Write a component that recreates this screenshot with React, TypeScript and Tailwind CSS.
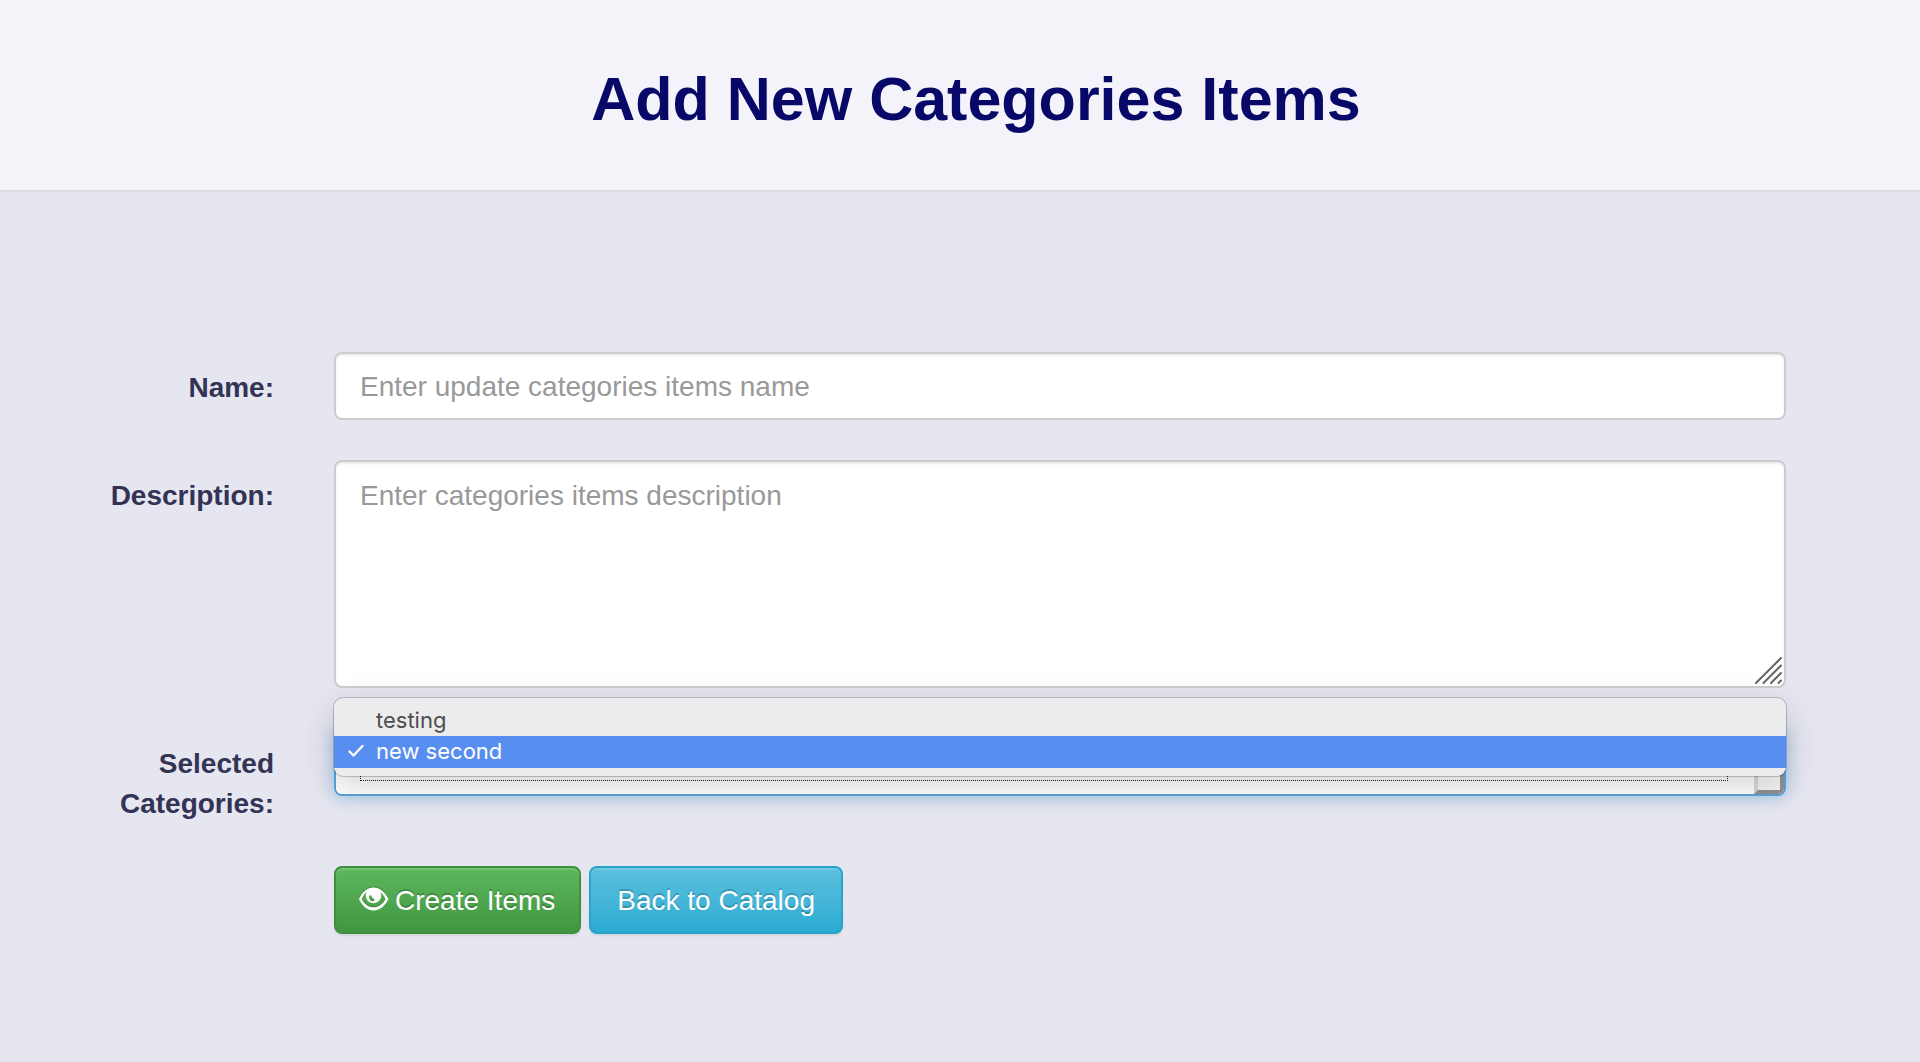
import React from "react";

const labelClass =
  "pt-4 pr-[60px] text-right text-[28px] leading-10 font-bold text-[#333355]";

const fieldClass =
  "block w-full rounded-lg border-2 border-[#cccccc] bg-white px-6 text-[28px] text-[#555555] shadow-[inset_0_2px_2px_rgba(0,0,0,0.075)] outline-none placeholder:text-[#999999] placeholder:opacity-100";

const buttonClass =
  "flex h-[68px] items-center rounded-lg border-2 pt-0.5 text-[28px] leading-10 text-white [text-shadow:0_-2px_0_rgba(0,0,0,0.2)] shadow-[inset_0_2px_0_rgba(255,255,255,0.15),0_2px_2px_rgba(0,0,0,0.075)]";

function EyeIcon() {
  return (
    <svg
      viewBox="0 0 30 24"
      className="mr-1.5 mb-1 h-6 w-[30px] shrink-0 drop-shadow-[0_-1px_0_rgba(0,0,0,0.2)]"
      aria-hidden="true"
    >
      <path
        fillRule="evenodd"
        fill="currentColor"
        d="M14.500 0.500C8.500 0.500 3 5 0 12C3 19 8.500 23.500 14.500 23.500S26 19 29.500 12C26 5 20.500 0.500 14.500 0.500ZM7.800 5C7.100 6.100 6.800 7.300 6.800 8.600C6.800 12.800 10.200 16.200 14.500 16.200S22.200 12.800 22.200 8.600C22.200 7.300 21.900 6.100 21.200 5C23.600 6.900 25.400 9.400 26.500 12C24 17 19.600 20.300 14.500 20.300S5.200 17 2.800 12C3.700 9.400 5.400 6.900 7.800 5ZM10.200 8.800C9.500 11.600 11 14 13.600 14.300C15.400 14.300 16 12.600 15 11.500C13.500 11.400 12.600 10.300 12.600 8.800C12 8 10.700 8 10.200 8.800Z"
      />
    </svg>
  );
}

function ResizeGrip() {
  return (
    <svg
      viewBox="0 0 28 28"
      className="pointer-events-none absolute right-[3px] bottom-[3px] h-7 w-7"
      fill="none"
      stroke="#666666"
      strokeWidth="2"
      strokeLinecap="round"
      aria-hidden="true"
    >
      <path d="M1 26L26 1M8.500 26L26 8.500M16 26L26 16M23.500 26L26 23.500" />
    </svg>
  );
}

function OptionsMenu() {
  return (
    <div
      role="listbox"
      aria-label="Categories"
      className="absolute inset-x-0 bottom-5 overflow-hidden rounded-[9px] bg-[#ebecee] pt-1.5 pb-2 font-['Inter',sans-serif] text-[22px] leading-8 shadow-[0_0_0_1px_rgba(0,0,0,0.2),0_10px_36px_rgba(0,0,0,0.16)]"
    >
      <div role="option" aria-selected="false" className="pl-[42px] text-[#4d4d4d]">
        testing
      </div>
      <div
        role="option"
        aria-selected="true"
        className="flex h-8 items-center bg-[#588eef] pb-0.5 pl-[14px] text-white"
      >
        <svg
          viewBox="0 0 16 14"
          className="mr-3 h-3.5 w-4"
          fill="none"
          stroke="currentColor"
          strokeWidth="2.400"
          strokeLinecap="round"
          strokeLinejoin="round"
          aria-hidden="true"
        >
          <path d="M1.500 7.500L5.500 11.500L14.500 2" />
        </svg>
        new second
      </div>
    </div>
  );
}

export default function App() {
  return (
    <div className="min-h-screen bg-[#e6e6f0] font-['Liberation_Sans',Arial,sans-serif]">
      <header className="border-b-2 border-[#dddddd] bg-[#f4f3fa] pt-[66px] pb-[58px] pl-8">
        <h1 className="text-center text-[61px] leading-[66px] font-bold text-[#080868]">
          Add New Categories Items
        </h1>
      </header>

      <form
        className="grid grid-cols-[334px_1fr] gap-y-10 pt-40 pr-[134px]"
        onSubmit={(e) => e.preventDefault()}
      >
        <label htmlFor="name" className={labelClass}>
          Name:
        </label>
        <input
          id="name"
          type="text"
          placeholder="Enter update categories items name"
          className={`${fieldClass} h-[68px] pt-0.5`}
        />

        <label htmlFor="description" className={labelClass}>
          Description:
        </label>
        <div className="relative">
          <textarea
            id="description"
            placeholder="Enter categories items description"
            className={`${fieldClass} h-[228px] resize-none py-3.5 leading-10`}
          />
          <ResizeGrip />
        </div>

        <label htmlFor="categories" className={labelClass}>
          Selected
          <br />
          Categories:
        </label>
        <div className="relative h-[68px]">
          <select
            id="categories"
            defaultValue="new second"
            className="block h-[68px] w-full appearance-none rounded-lg border-2 border-[#5aa4e0] bg-[#f4f4f4] px-6 text-[28px] text-transparent shadow-[0_0_16px_rgba(102,175,233,0.6)] outline-none"
          >
            <option>testing</option>
            <option>new second</option>
          </select>
          <div className="pointer-events-none absolute inset-[2px] flex overflow-hidden rounded-md bg-linear-to-b from-[#f4f4f4] to-white">
            <div className="mr-[26px] mb-[13px] ml-6 flex-1 border border-dotted border-[#222222]" />
            <div className="w-[30px] border-4 border-[#909090] border-l-[#d8d8d8] bg-[#f4f4f4]" />
          </div>
          <OptionsMenu />
        </div>

        <div className="col-start-2 mt-0.5 flex gap-2">
          <button
            type="submit"
            className={`${buttonClass} border-[#3e8f3e] bg-linear-to-b from-[#5cb85c] to-[#419641] pr-6 pl-[23px]`}
          >
            <EyeIcon />
            Create Items
          </button>
          <a
            href="#catalog"
            className={`${buttonClass} border-[#28a4c9] bg-linear-to-b from-[#5bc0de] to-[#2aabd2] px-[26px]`}
          >
            Back to Catalog
          </a>
        </div>
      </form>
    </div>
  );
}
